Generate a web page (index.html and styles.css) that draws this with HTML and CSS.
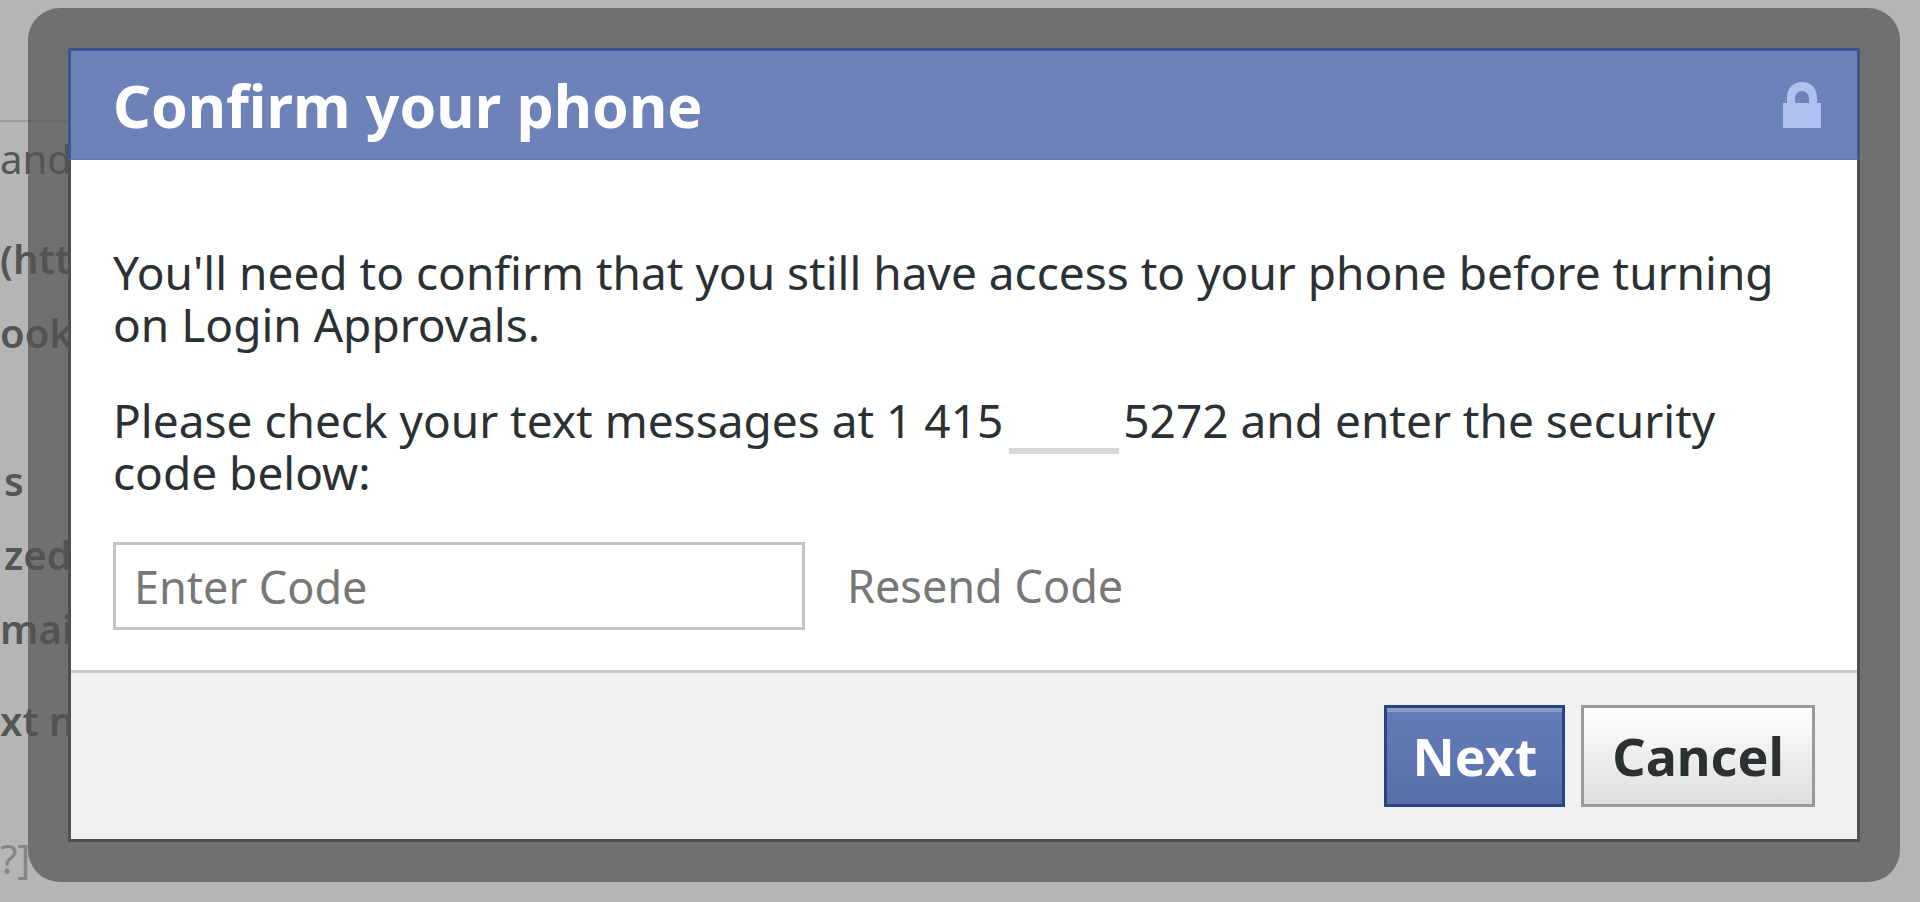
FILE: index.html
```
<!DOCTYPE html>
<html lang="en">
<head>
    <meta charset="utf-8">
    <title>Confirm your phone</title>
    <link rel="stylesheet" href="styles.css">
</head>
<body>
    <div class="page">
        <div class="page-top"></div>
        <p class="first">and</p>
        <p class="bold">(htt</p>
        <p class="bold gap">ook</p>
        <p class="bold indent">s</p>
        <p class="bold indent">zed</p>
        <p class="bold">mai</p>
        <p class="bold last">xt n</p>
        <p class="light">?]</p>
    </div>

    <div class="overlay">
        <form class="dialog" role="dialog" aria-labelledby="title">
            <div class="header">
                <h1 id="title">Confirm your phone</h1>
                <svg class="lock" viewBox="0 0 38 46" aria-hidden="true">
                    <path d="M4 21V16C4 6 10 0 19 0S34 6 34 16V21H38V46H0V21ZM12 21H26V17C26 12 23 9 19 9S12 12 12 17Z" fill="#b0c0f0" fill-rule="evenodd"/>
                </svg>
            </div>
            <div class="content">
                <p>You'll need to confirm that you still have access to your phone before turning on Login Approvals.</p>
                <p>Please check your text messages at 1 415<span class="blank"></span>5272 and enter the security code below:</p>
                <div class="code-row">
                    <input type="text" class="code" placeholder="Enter Code" aria-label="Enter Code">
                    <a href="#" class="resend">Resend Code</a>
                </div>
            </div>
            <div class="footer">
                <button type="submit" class="btn btn-next">Next</button>
                <button type="button" class="btn btn-cancel">Cancel</button>
            </div>
        </form>
    </div>
</body>
</html>
```
FILE: styles.css
```
* {
    box-sizing: border-box;
}

body {
    margin: 0;
    min-height: 100vh;
    overflow: hidden;
    background-color: #b5b5b5;
    font-family: "Noto Sans", "Open Sans", sans-serif;
    font-size: 46px;
    line-height: 52px;
    color: #2b3033;
}

/* page behind the dialog */
.page {
    width: 80px;
    white-space: nowrap;
    font-size: 40px;
    color: #555;
}

.page-top {
    height: 122px;
    border-bottom: 2px solid #9c9c9c;
}

.page p {
    margin: 0;
    height: 74px;
    line-height: 74px;
}

.page .first {
    height: 100px;
}

.page .bold {
    font-weight: 600;
}

.page .indent {
    padding-left: 4px;
}

.page .gap {
    height: 148px;
}

.page .last {
    padding-top: 18px;
    height: 156px;
}

.page .light {
    color: #858585;
}

.overlay {
    position: absolute;
    top: 8px;
    left: 28px;
    right: 20px;
    padding: 40px;
    border-radius: 32px;
    background-color: rgba(82, 82, 82, 0.7);
}

.dialog {
    border: 3px solid #505050;
    background-color: #fff;
}

.header {
    display: flex;
    align-items: center;
    justify-content: space-between;
    margin: -3px -3px 0;
    padding: 12px 36px 12px 42px;
    border: 3px solid #3f5490;
    border-bottom: 1px solid #6479b0;
    background-color: #6d82b9;
}

h1 {
    margin: 0;
    font-size: 59px;
    line-height: 84px;
    color: #fff;
}

.lock {
    width: 38px;
    height: 46px;
}

.content {
    padding: 86px 40px 40px 42px;
}

.content p {
    margin: 0 0 44px;
}

.blank {
    display: inline-block;
    width: 110px;
    height: 60px;
    margin: 0 4px -8px 6px;
    border-bottom: 6px solid #d9d9d9;
    vertical-align: top;
}

.code-row {
    display: flex;
    align-items: center;
    gap: 42px;
    font-size: 45px;
}

.code {
    width: 692px;
    height: 88px;
    padding: 0 18px;
    border: 3px solid #bfc5c8;
    border-radius: 0;
    background-color: #fff;
    font: inherit;
    color: #2b3033;
}

.code::placeholder {
    color: #777;
    opacity: 1;
}

.resend {
    color: #777;
    text-decoration: none;
}

.footer {
    display: flex;
    justify-content: flex-end;
    gap: 16px;
    padding: 32px 42px;
    border-top: 3px solid #c9c9c9;
    background-color: #f1f1f1;
}

.btn {
    height: 102px;
    padding: 0 28px;
    border: 3px solid #999;
    font: inherit;
    font-size: 52px;
    font-weight: bold;
    cursor: pointer;
}

.btn-next {
    padding: 0 25px;
    border-color: #29447e;
    background: linear-gradient(#647db8, #586fab);
    box-shadow: inset 0 4px #8a9cc8;
    color: #fff;
}

.btn-cancel {
    background: linear-gradient(#fff, #dedede);
    color: #2b3033;
}
```
